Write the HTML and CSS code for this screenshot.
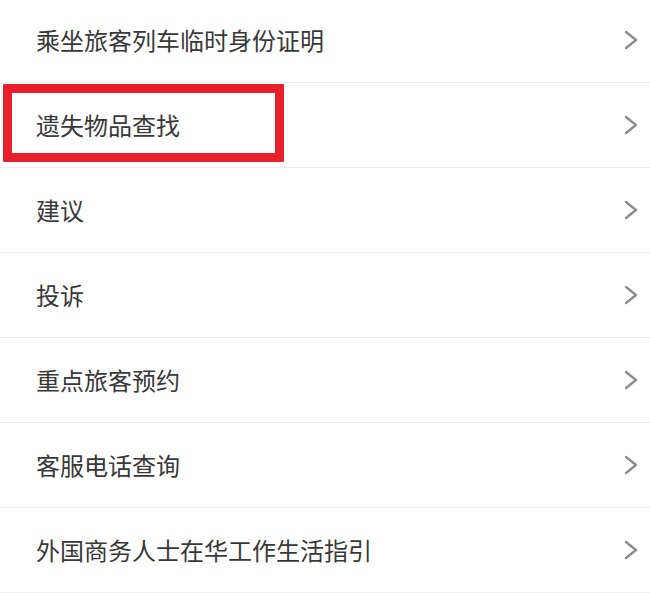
FILE: index.html
```html
<!DOCTYPE html>
<html lang="zh-CN">
<head>
<meta charset="utf-8">
<title>服务列表</title>
<link rel="stylesheet" href="styles.css">
</head>
<body>
<ul class="menu">
  <li class="row"><span class="label">乘坐旅客列车临时身份证明</span><svg class="chev" viewBox="0 0 14 20" width="14" height="20"><polyline points="2,2 12,10 2,18"/></svg></li>
  <li class="row highlighted"><span class="label">遗失物品查找</span><svg class="chev" viewBox="0 0 14 20" width="14" height="20"><polyline points="2,2 12,10 2,18"/></svg><span class="mark"></span></li>
  <li class="row"><span class="label">建议</span><svg class="chev" viewBox="0 0 14 20" width="14" height="20"><polyline points="2,2 12,10 2,18"/></svg></li>
  <li class="row"><span class="label">投诉</span><svg class="chev" viewBox="0 0 14 20" width="14" height="20"><polyline points="2,2 12,10 2,18"/></svg></li>
  <li class="row"><span class="label">重点旅客预约</span><svg class="chev" viewBox="0 0 14 20" width="14" height="20"><polyline points="2,2 12,10 2,18"/></svg></li>
  <li class="row"><span class="label">客服电话查询</span><svg class="chev" viewBox="0 0 14 20" width="14" height="20"><polyline points="2,2 12,10 2,18"/></svg></li>
  <li class="row"><span class="label">外国商务人士在华工作生活指引</span><svg class="chev" viewBox="0 0 14 20" width="14" height="20"><polyline points="2,2 12,10 2,18"/></svg></li>
</ul>
</body>
</html>
```
FILE: styles.css
```css
html, body {
  margin: 0;
  padding: 0;
  background: #ffffff;
  overflow: hidden;
}
body {
  font-family: "Noto Sans CJK SC", "Noto Sans", sans-serif;
  color: #333333;
}
.menu {
  list-style: none;
  margin: -2px 0 0 0;
  padding: 0;
}
.row {
  position: relative;
  display: flex;
  align-items: center;
  justify-content: space-between;
  height: 84px;
  padding: 0 12px 0 36px;
  border-bottom: 1px solid #efefef;
}
.label {
  font-size: 24px;
  line-height: 1;
  color: #383838;
}
.chev {
  display: block;
  fill: none;
  stroke: #8c8c8c;
  stroke-width: 2.4;
  stroke-linecap: round;
  stroke-linejoin: round;
}
.mark {
  position: absolute;
  left: 3px;
  top: 1px;
  width: 263px;
  height: 60px;
  border: 9px solid #e8202c;
  border-radius: 1px;
  pointer-events: none;
}
```
